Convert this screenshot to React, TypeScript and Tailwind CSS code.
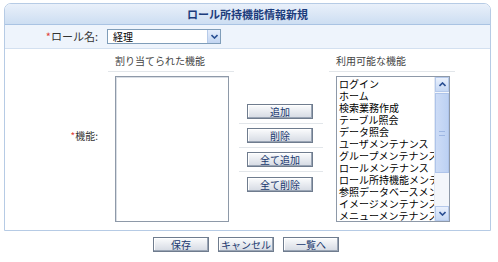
import React from 'react';

const FONT = { fontFamily: '"Noto Sans CJK JP", "Noto Sans", sans-serif' };

const available = [
  'ログイン',
  'ホーム',
  '検索業務作成',
  'テーブル照会',
  'データ照会',
  'ユーザメンテナンス',
  'グループメンテナンス',
  'ロールメンテナンス',
  'ロール所持機能メンテナンス',
  '参照データベースメンテナンス',
  'イメージメンテナンス',
  'メニューメンテナンス',
];

const Btn: React.FC<{ label: string; className?: string }> = ({ label, className }) => (
  <button
    className={`h-[15px] border border-[#6f7c8e] bg-gradient-to-b from-[#fbfcfd] to-[#d5dae3] text-[10px] leading-[13px] text-[#20386e] shadow-[inset_-1px_-1px_0_#9aa5b5,inset_1px_1px_0_#ffffff] ${className ?? ''}`}
  >
    {label}
  </button>
);

const Chevron: React.FC<{ up?: boolean }> = ({ up }) => (
  <svg width="7" height="5" viewBox="0 0 7 5">
    <path d={up ? 'M0.5 4 L3.5 1 L6.5 4' : 'M0.5 1 L3.5 4 L6.5 1'} fill="none" stroke="#2a4f93" strokeWidth="1.6" />
  </svg>
);

export default function App() {
  return (
    <div className="w-[498px] h-[262px] bg-white text-[10px] text-[#333]" style={FONT}>
      <div className="pt-[3px] pl-[4px]">
        <div className="w-[487px] h-[228px] border border-[#b6cbe5] rounded-t-[7px] overflow-hidden bg-white flex flex-col">
          {/* header */}
          <div className="h-[21px] bg-gradient-to-b from-[#e9f0fa] to-[#cddef2] border-b border-[#a9c3e3] flex items-center justify-center">
            <span className="text-[11px] font-bold text-[#1c3c7c]">ロール所持機能情報新規</span>
          </div>

          {/* role name row */}
          <div className="h-[24px] bg-[#eef4fc] border-b border-[#d3e0f0] flex items-center">
            <div className="w-[93px] text-right text-[11px] text-[#333]">
              <span className="text-[#e0413b]">*</span>ロール名:
            </div>
            <div className="ml-[9px] w-[114px] h-[15px] border border-[#7f9db9] bg-white flex items-center">
              <span className="flex-1 pl-[5px] text-[10px] leading-[13px] text-black">経理</span>
              <div className="w-[13px] h-[13px] bg-gradient-to-b from-[#e6eefc] to-[#c2d5f2] border-l border-[#b7cbe9] flex items-center justify-center">
                <Chevron />
              </div>
            </div>
          </div>

          {/* functions row */}
          <div className="flex flex-1">
            <div className="w-[103px] flex items-center justify-end pr-[10px] pb-[8px]">
              <span>
                <span className="text-[#e0413b]">*</span>機能:
              </span>
            </div>

            {/* assigned */}
            <div className="w-[126px] flex flex-col">
              <div className="h-[23px] border-b border-[#e2e6ea] pl-[7px] pt-[6px] leading-[12px] text-[#444]">割り当てられた機能</div>
              <div className="ml-[7px] mt-[4px] w-[114px] h-[146px] border border-[#8e99a8] shadow-[inset_1px_1px_0_#d9dee5] bg-white" />
            </div>

            {/* buttons */}
            <div className="ml-[5px] w-[84px] flex flex-col pt-[51px]">
              {['追加', '削除', '全て追加', '全て削除'].map((b, i) => (
                <div key={b} className={`h-[24px] pl-[8px] flex items-center ${i < 3 ? 'border-b border-[#e2e6ea]' : ''}`}>
                  <Btn label={b} className="w-[66px]" />
                </div>
              ))}
            </div>

            {/* available */}
            <div className="ml-[6px] w-[126px] flex flex-col">
              <div className="h-[23px] border-b border-[#e2e6ea] pl-[7px] pt-[6px] leading-[12px] text-[#444]">利用可能な機能</div>
              <div className="ml-[7px] mt-[4px] w-[114px] h-[146px] border border-[#8e99a8] bg-white flex overflow-hidden">
                <div className="flex-1 overflow-hidden pl-[2px] pt-[1px]">
                  {available.map((a) => (
                    <div key={a} className="h-[12px] leading-[12px] text-[10px] text-black whitespace-nowrap">
                      {a}
                    </div>
                  ))}
                </div>
                <div className="w-[15px] flex flex-col bg-[#f3f6fb] border-l border-[#e3e9f3]">
                  <div className="h-[15px] bg-gradient-to-b from-[#eaf1fd] to-[#c6d8f4] border border-[#b5c9eb] flex items-center justify-center">
                    <Chevron up />
                  </div>
                  <div className="mt-[1px] h-[80px] bg-gradient-to-r from-[#cddcf6] to-[#bcd1f3] border border-[#aec4ea] flex items-center justify-center">
                    <div className="w-[6px] h-[5px] border-y border-[#9db6e2]" />
                  </div>
                  <div className="flex-1" />
                  <div className="h-[15px] bg-gradient-to-b from-[#eaf1fd] to-[#c6d8f4] border border-[#b5c9eb] flex items-center justify-center">
                    <Chevron />
                  </div>
                </div>
              </div>
            </div>
          </div>
        </div>
      </div>

      {/* footer buttons */}
      <div className="mt-[6px] pl-[153px] flex gap-[9px]">
        <Btn label="保存" className="w-[56px] h-[15px]" />
        <Btn label="キャンセル" className="w-[56px] h-[15px]" />
        <Btn label="一覧へ" className="w-[56px] h-[15px]" />
      </div>
    </div>
  );
}
